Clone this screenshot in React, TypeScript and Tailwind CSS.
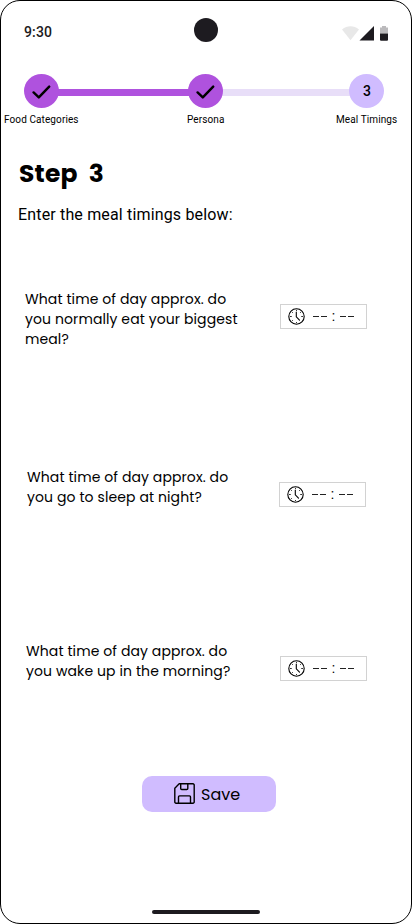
import React from "react";

const geometric = "font-['Poppins','Inter',sans-serif]";

function StatusBar() {
  return (
    <header className="grid h-[60px] grid-cols-3 items-center pl-[23px] pr-[23px]">
      <span className="pt-[2px] text-[14px] font-medium leading-5 tracking-[0.14px] text-[#1d1b20]">9:30</span>
      <span className="h-6 w-6 -translate-y-px justify-self-center rounded-full bg-[#1d1b20]" />
      <svg className="mt-[5px] justify-self-end" width="46" height="16" viewBox="0 0 46 16">
        <path d="M0 3.6C5.2-.8 11.8-.8 17 3.6L8.5 14.2Z" fill="#e8e8e8" />
        <path d="M32 0v14.5H17.5Z" fill="#1d1b20" />
        <path d="M38 1.4h2V0h4v1.4h2v6.1h-8Z" fill="#bbbabc" />
        <path d="M38 7.5h8v6.2a1 1 0 0 1-1 1h-6a1 1 0 0 1-1-1Z" fill="#1d1b20" />
      </svg>
    </header>
  );
}

function StepDot({ done }: { done?: boolean }) {
  return (
    <span
      className={`z-10 flex h-[34px] w-[35px] shrink-0 items-center justify-center rounded-[50%] text-[14px] font-medium text-black ${
        done ? "bg-[#af52de]" : "bg-[#d0bcff]"
      }`}
    >
      {done ? (
        <svg className="mt-px" width="19" height="14" viewBox="0 0 19 14" fill="none" stroke="#000" strokeWidth="2.4" strokeLinecap="round" strokeLinejoin="round">
          <path d="M1.6 7.4 6.8 12.4 17.2 1.6" />
        </svg>
      ) : (
        <span className="pl-px">3</span>
      )}
    </span>
  );
}

function Stepper() {
  return (
    <nav className="pt-[13px]">
      <div className="flex items-center pl-[23px] pr-[27px]">
        <StepDot done />
        <span className="mt-[3px] -mx-px h-[7px] flex-1 bg-[#af52de]" />
        <StepDot done />
        <span className="mt-[3px] -mx-px h-[7px] w-[128px] bg-[#e8def8]" />
        <StepDot />
      </div>
      <div className="flex pl-[3px] pt-[4px] text-[10px] leading-4 tracking-[0.1px] text-black">
        <span className="w-[183px]">Food Categories</span>
        <span className="w-[149px]">Persona</span>
        <span className="whitespace-nowrap">Meal Timings</span>
      </div>
    </nav>
  );
}

function TimeField() {
  return (
    <div className="flex h-[25px] w-[87px] shrink-0 items-center border border-[#d2d2d2] pl-[7px]">
      <svg width="17" height="17" viewBox="0 0 17 17" fill="none" stroke="#000" strokeWidth="1.1" strokeLinecap="round">
        <circle cx="8.5" cy="8.5" r="7.7" />
        <path d="M8.3 4v4.8l3.2 3.3" />
        <path d="M8.5 2.3v.2M8.5 14.5v.2M2.5 8.5h.8M13.7 8.5h.8M4.3 4.3l.2.2M12.5 4.5l.2-.2M4.3 12.7l.2-.2" strokeWidth=".9" />
      </svg>
      <span className="ml-[8px] flex items-center gap-[2px]">
        <i className="h-px w-[6px] bg-[#222]" />
        <i className="h-px w-[6px] bg-[#222]" />
        <b className="mb-[2px] w-[9px] text-center text-[14px] font-normal leading-4 text-black">:</b>
        <i className="h-px w-[6px] bg-[#222]" />
        <i className="h-px w-[6px] bg-[#222]" />
      </span>
    </div>
  );
}

function Question({ lines, place, field }: { lines: string[]; place: string; field: string }) {
  return (
    <section className={`flex items-start ${place}`}>
      <p className={`shrink-0 text-[14px] leading-5 tracking-[0.1px] text-black ${geometric}`}>
        {lines.map((text) => (
          <span key={text} className="block whitespace-nowrap">
            {text}
          </span>
        ))}
      </p>
      <div className={field}>
        <TimeField />
      </div>
    </section>
  );
}

export default function App() {
  return (
    <main className="flex h-[924px] w-[412px] flex-col overflow-hidden rounded-[20px] border border-black bg-white font-['Roboto',sans-serif]">
      <StatusBar />
      <Stepper />
      <h1 className={`mt-[28px] h-9 pl-[18px] text-[25px] font-bold leading-9 tracking-[0.2px] text-black ${geometric}`}>
        Step<span className="ml-[11px]">3</span>
      </h1>
      <p className="mt-[11px] h-6 pl-[17px] text-[16px] leading-6 tracking-[0.16px] text-black">Enter the meal timings below:</p>

      <div className="mt-[62px] h-[178px]">
        <Question
          place="pl-[24px]"
          field="ml-auto mr-[44px] mt-[15px]"
          lines={["What time of day approx. do", "you normally eat your biggest", "meal?"]}
        />
      </div>
      <div className="h-[174px]">
        <Question
          place="pl-[26px]"
          field="ml-auto mr-[45px] mt-[15px]"
          lines={["What time of day approx. do", "you go to sleep at night?"]}
        />
      </div>
      <div className="h-[135px]">
        <Question
          place="pl-[25px]"
          field="ml-auto mr-[44px] mt-[15px]"
          lines={["What time of day approx. do", "you wake up in the morning?"]}
        />
      </div>

      <button className={`ml-[141px] flex h-9 w-[134px] items-center rounded-[10px] bg-[#d0bcff] pl-[32px] text-[16px] text-black ${geometric}`}>
        <svg className="-mt-px" width="21" height="21" viewBox="0 0 21 21" fill="none" stroke="#000" strokeWidth="1.4" strokeLinejoin="round">
          <path d="M5.2.8H19a1.2 1.2 0 0 1 1.2 1.2v17a1.2 1.2 0 0 1-1.2 1.2H2A1.2 1.2 0 0 1 .8 19V5.2Z" />
          <path d="M6.7.8v4.7a1 1 0 0 0 1 1h5.1a1 1 0 0 0 1-1V.8M4.5 20.2v-6.3a1 1 0 0 1 1-1h10a1 1 0 0 1 1 1v6.3" />
        </svg>
        <span className="ml-[6px] pt-px">Save</span>
      </button>
      <div className="mb-[9px] mt-auto h-[4px] w-[108px] self-center rounded-full bg-[#1d1b20]" />
    </main>
  );
}
